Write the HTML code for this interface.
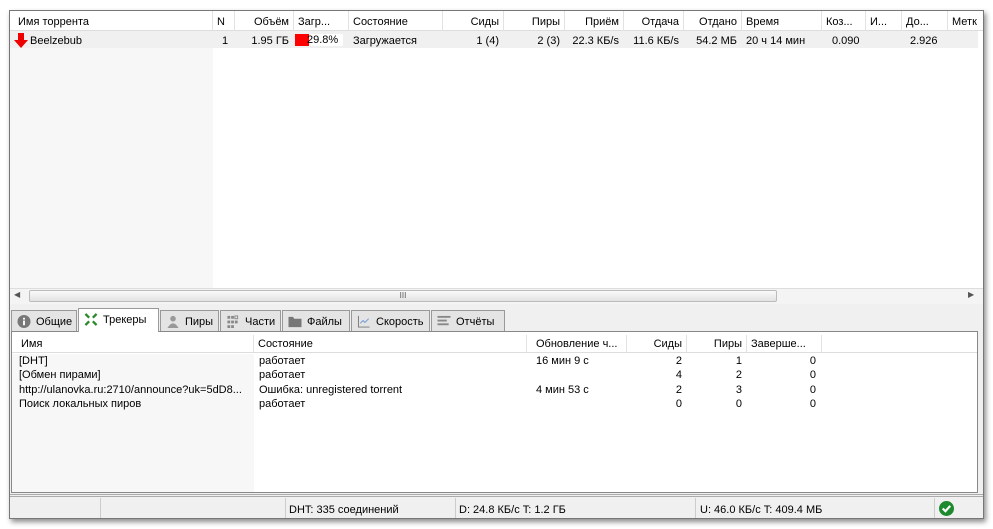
<!DOCTYPE html><html><head><meta charset="utf-8"><style>
*{margin:0;padding:0;box-sizing:border-box}
body{width:993px;height:529px;background:#fff;font-family:"Liberation Sans","DejaVu Sans",sans-serif;font-size:11px;color:#000;position:relative;overflow:hidden}
.a{position:absolute;white-space:nowrap}
.win{position:absolute;left:9px;top:10px;width:975px;height:509px;background:#f0f0f0;border:1px solid #777;box-shadow:2px 3px 5px rgba(0,0,0,.45)}
.hc{position:absolute;top:0;height:20px;line-height:22px;border-right:1px solid #e2e2e2;padding:0 4px;overflow:hidden}
.r{text-align:right}
.tab{position:absolute;top:310px;height:21px;background:#e4e4e4;border:1px solid #999;border-bottom:none;line-height:22px;padding-left:24px}
.ic{position:absolute;left:5px;top:4px;width:14px;height:13px}
</style></head><body>
<div class="win"></div>
<div class="a" style="left:10px;top:11px;width:973px;height:277px;background:#fff"></div>
<div class="a" style="left:10px;top:48px;width:203px;height:240px;background:#f7f7f7"></div>
<div class="a" style="left:10px;top:31px;width:968px;height:17px;background:#f0f0f0"></div>
<div class="a" style="left:10px;top:11px;width:973px;height:20px;background:#fff;border-bottom:1px solid #ddd">
<div class="hc" style="left:0;width:203px;padding-left:8px">Имя торрента</div>
<div class="hc" style="left:203px;width:22px">N</div>
<div class="hc r" style="left:225px;width:59px">Объём</div>
<div class="hc" style="left:284px;width:55px">Загр...</div>
<div class="hc" style="left:339px;width:94px">Состояние</div>
<div class="hc r" style="left:433px;width:61px">Сиды</div>
<div class="hc r" style="left:494px;width:61px">Пиры</div>
<div class="hc r" style="left:555px;width:59px">Приём</div>
<div class="hc r" style="left:614px;width:60px">Отдача</div>
<div class="hc r" style="left:674px;width:58px">Отдано</div>
<div class="hc" style="left:732px;width:80px">Время</div>
<div class="hc" style="left:812px;width:44px">Коз...</div>
<div class="hc" style="left:856px;width:36px">И...</div>
<div class="hc" style="left:892px;width:46px">До...</div>
<div class="hc" style="left:938px;width:35px;border:none">Метк</div>
</div>
<svg class="a" style="left:13px;top:33px" width="16" height="15" viewBox="0 0 16 15"><path d="M5 0h6v7h4L8 15 1 7h4z" fill="#e00"/></svg>
<div class="a" style="left:30px;top:35px">Beelzebub</div>
<div class="a" style="left:222px;top:35px">1</div>
<div class="a r" style="left:235px;top:35px;width:54px">1.95 ГБ</div>
<div class="a" style="left:295px;top:34px;width:48px;height:12px;background:#fff"></div>
<div class="a" style="left:295px;top:34px;width:14px;height:12px;background:#f00"></div>
<div class="a" style="left:307px;top:34px">29.8%</div>
<div class="a" style="left:353px;top:35px">Загружается</div>
<div class="a r" style="left:443px;top:35px;width:56px">1 (4)</div>
<div class="a r" style="left:504px;top:35px;width:56px">2 (3)</div>
<div class="a r" style="left:565px;top:35px;width:54px">22.3 КБ/s</div>
<div class="a r" style="left:624px;top:35px;width:55px">11.6 КБ/s</div>
<div class="a r" style="left:684px;top:35px;width:53px">54.2 МБ</div>
<div class="a" style="left:746px;top:35px">20 ч 14 мин</div>
<div class="a" style="left:832px;top:35px">0.090</div>
<div class="a" style="left:910px;top:35px">2.926</div>
<div class="a" style="left:10px;top:288px;width:973px;height:16px;background:#f4f4f4;border-top:1px solid #ddd"></div>
<div class="a" style="left:29px;top:290px;width:748px;height:12px;background:linear-gradient(#fafafa,#e2e2e2);border:1px solid #bbb;border-radius:2px;text-align:center;font-size:8px;line-height:10px;color:#555">III</div>
<div class="a" style="left:14px;top:290px;font-size:8px;color:#555">◀</div>
<div class="a" style="left:968px;top:290px;font-size:8px;color:#555">▶</div>
<div class="tab" style="left:11px;width:66px"><svg class="ic" viewBox="0 0 14 14"><circle cx="7" cy="7" r="7" fill="#777"/><rect x="6" y="6" width="2" height="5" fill="#fff"/><rect x="6" y="3" width="2" height="2" fill="#fff"/></svg>Общие</div>
<div class="tab" style="left:78px;top:308px;height:24px;width:81px;background:#fff;z-index:2;line-height:23px"><svg class="ic" viewBox="0 0 14 14" style="top:4px"><path d="M1 1l4 4M13 1l-4 4M1 13l4-4M13 13l-4-4" stroke="#2a8a2a" stroke-width="2.5"/></svg>Трекеры</div>
<div class="tab" style="left:160px;width:59px"><svg class="ic" viewBox="0 0 14 14"><circle cx="7" cy="4" r="3" fill="#999"/><path d="M1 14q6-10 12 0z" fill="#999"/></svg>Пиры</div>
<div class="tab" style="left:220px;width:61px"><svg class="ic" viewBox="0 0 14 14" fill="#888"><rect x="1" y="1" width="3" height="3"/><rect x="5" y="1" width="3" height="3"/><rect x="9" y="1" width="3" height="3" fill="none" stroke="#888"/><rect x="1" y="6" width="3" height="3"/><rect x="5" y="6" width="3" height="3"/><rect x="9" y="6" width="3" height="3"/><rect x="1" y="11" width="3" height="3"/><rect x="5" y="11" width="3" height="3"/></svg>Части</div>
<div class="tab" style="left:282px;width:68px"><svg class="ic" viewBox="0 0 14 14"><path d="M0 2h5l1 2h8v9H0z" fill="#777"/></svg>Файлы</div>
<div class="tab" style="left:351px;width:79px"><svg class="ic" viewBox="0 0 14 14"><path d="M1 1v12h12" stroke="#777" fill="none"/><path d="M3 9l3-3 2 2 4-4" stroke="#6a9ad0" fill="none"/></svg>Скорость</div>
<div class="tab" style="left:431px;width:74px"><svg class="ic" viewBox="0 0 14 14" fill="#888"><rect x="0" y="1" width="14" height="2"/><rect x="0" y="5" width="10" height="2"/><rect x="0" y="9" width="12" height="2"/></svg>Отчёты</div>
<div class="a" style="left:11px;top:331px;width:967px;height:162px;background:#fff;border:1px solid #888"></div>
<div class="a" style="left:12px;top:354px;width:242px;height:138px;background:#f7f7f7"></div>
<div class="a" style="left:12px;top:335px;width:965px;height:18px;border-bottom:1px solid #ddd;background:#fff">
<div class="hc" style="left:0;width:242px;height:17px;line-height:19px;padding-left:9px">Имя</div>
<div class="hc" style="left:242px;width:273px;height:17px;line-height:19px">Состояние</div>
<div class="hc" style="left:515px;width:100px;height:17px;line-height:19px;padding-left:9px">Обновление ч...</div>
<div class="hc r" style="left:615px;width:60px;height:17px;line-height:19px">Сиды</div>
<div class="hc r" style="left:675px;width:60px;height:17px;line-height:19px">Пиры</div>
<div class="hc" style="left:735px;width:75px;height:17px;line-height:19px">Заверше...</div>
</div>
<div class="a" style="left:19px;top:354px;line-height:14.3px">[DHT]<br>[Обмен пирами]<br>http://ulanovka.ru:2710/announce?uk=5dD8...<br>Поиск локальных пиров</div>
<div class="a" style="left:259px;top:354px;line-height:14.3px">работает<br>работает<br>Ошибка: unregistered torrent<br>работает</div>
<div class="a" style="left:536px;top:354px;line-height:14.3px">16 мин 9 с<br><br>4 мин 53 с</div>
<div class="a r" style="left:640px;top:354px;width:42px;line-height:14.3px">2<br>4<br>2<br>0</div>
<div class="a r" style="left:700px;top:354px;width:42px;line-height:14.3px">1<br>2<br>3<br>0</div>
<div class="a r" style="left:780px;top:354px;width:36px;line-height:14.3px">0<br>0<br>0<br>0</div>
<div class="a" style="left:10px;top:494px;width:973px;height:3px;border-top:1px solid #aaa;border-bottom:1px solid #aaa"></div>
<div class="a" style="left:10px;top:497px;width:973px;height:21px;background:#f0f0f0"></div>
<div class="a" style="left:100px;top:498px;width:1px;height:20px;background:#ccc"></div>
<div class="a" style="left:285px;top:498px;width:1px;height:20px;background:#ccc"></div>
<div class="a" style="left:455px;top:498px;width:1px;height:20px;background:#ccc"></div>
<div class="a" style="left:695px;top:498px;width:1px;height:20px;background:#ccc"></div>
<div class="a" style="left:934px;top:498px;width:1px;height:20px;background:#ccc"></div>
<div class="a" style="left:289px;top:504px">DHT: 335 соединений</div>
<div class="a" style="left:459px;top:504px">D: 24.8 КБ/с T: 1.2 ГБ</div>
<div class="a" style="left:700px;top:504px">U: 46.0 КБ/с T: 409.4 МБ</div>
<svg class="a" style="left:939px;top:501px" width="15" height="15" viewBox="0 0 14 14"><circle cx="7" cy="7" r="7" fill="#1e8a2e"/><path d="M3.5 7l2.5 2.5 4.5-5" stroke="#fff" stroke-width="2" fill="none"/></svg>
</body></html>
